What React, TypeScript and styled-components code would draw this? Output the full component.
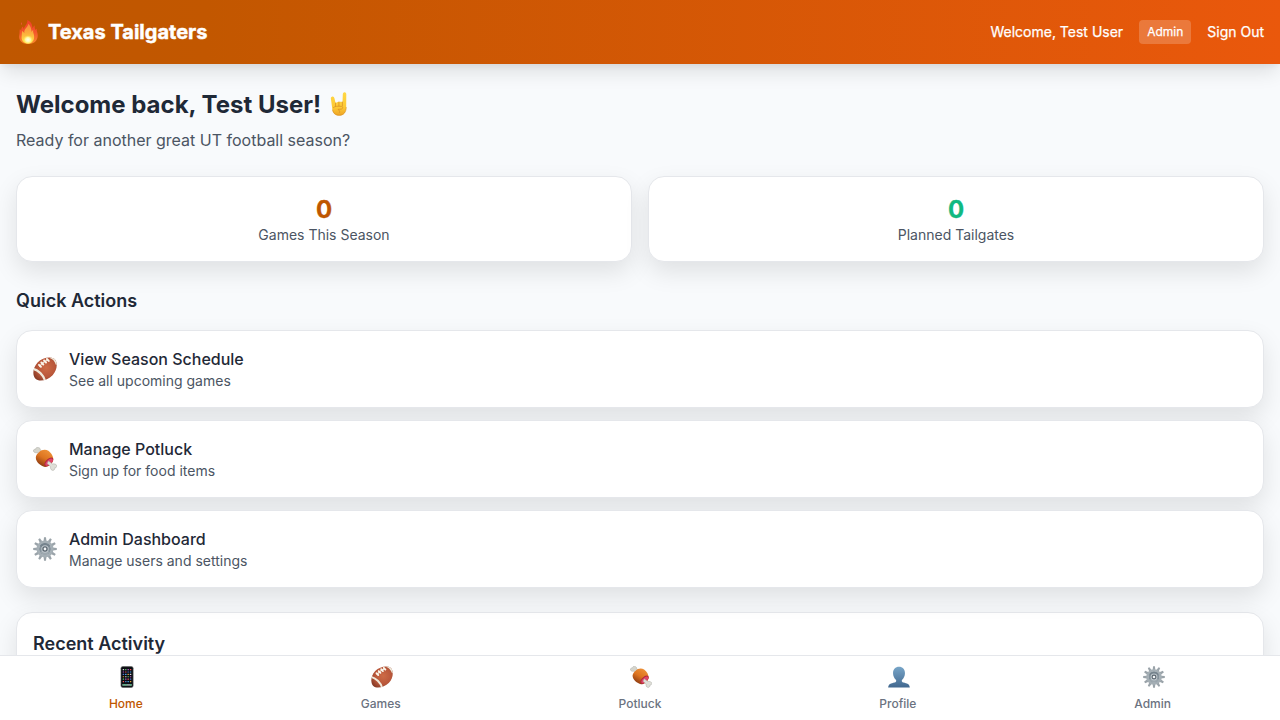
import React from 'react';
import styled, { createGlobalStyle } from 'styled-components';

const GlobalStyle = createGlobalStyle`
  *, *::before, *::after { box-sizing: border-box; }
  html, body { margin: 0; padding: 0; height: 720px; overflow: hidden; }
  body {
    background: #f8fafc;
    color: #1f2937;
    font-family: Inter, "Liberation Sans", sans-serif;
    font-size: 16px;
    line-height: 24px;
    -webkit-font-smoothing: antialiased;
  }
  h1, h2, h3, p { margin: 0; }
  button { font: inherit; border: 0; background: none; padding: 0; color: inherit; cursor: pointer; }
`;

const Screen = styled.div`
  height: 720px;
  display: flex;
  flex-direction: column;
  overflow: hidden;
`;

const Header = styled.header`
  position: relative;
  z-index: 1;
  flex: none;
  height: 64px;
  padding: 0 16px;
  display: flex;
  align-items: center;
  justify-content: space-between;
  color: #fff;
  background: linear-gradient(90deg, #bf5700 0%, #c25700 16%, #ea580c 100%);
  box-shadow: 0 10px 20px -3px rgba(0, 0, 0, 0.12), 0 4px 6px -2px rgba(0, 0, 0, 0.05);
`;

const Brand = styled.div`
  display: flex;
  align-items: center;
  gap: 8px;
  font-size: 20px;
  line-height: 28px;
  font-weight: 700;
  -webkit-text-stroke: 0.45px #fff;
`;

const Account = styled.div`
  display: flex;
  align-items: center;
  gap: 16px;
  font-size: 14px;
  line-height: 20px;
  -webkit-text-stroke: 0.25px #fff;
`;

const RoleBadge = styled.span`
  padding: 4px 8px;
  border-radius: 4px;
  background: rgba(255, 255, 255, 0.2);
  font-size: 12px;
  line-height: 16px;
`;

const Main = styled.main`
  flex: 1;
  min-height: 0;
  padding: 24px 16px 0;
  overflow: hidden;
`;

const Title = styled.h1`
  display: flex;
  align-items: center;
  gap: 7px;
  font-size: 24px;
  line-height: 32px;
  font-weight: 700;
`;

const TitleText = styled.span`
  height: 32px;
  padding-top: 1px;
`;

const Subtitle = styled.p`
  margin-top: 8px;
  color: #4b5563;
`;

const Card = styled.section`
  border: 1px solid #e5e7eb;
  border-radius: 16px;
  padding: 16px;
  background: #fff;
  box-shadow: 0 10px 25px rgba(0, 0, 0, 0.1);
`;

const Stats = styled.div`
  display: grid;
  grid-template-columns: 1fr 1fr;
  gap: 16px;
  margin: 24px 0;
`;

const StatCard = styled(Card)`
  text-align: center;
`;

const StatValue = styled.div<{ $color: string }>`
  height: 32px;
  padding-top: 1px;
  font-size: 24px;
  line-height: 32px;
  font-weight: 700;
  -webkit-text-stroke: 0.3px currentColor;
  color: ${(p) => p.$color};
`;

const SmallText = styled.p`
  font-size: 14px;
  line-height: 20px;
  color: #4b5563;
`;

const SectionTitle = styled.h2`
  height: 28px;
  padding-top: 1px;
  font-size: 18px;
  line-height: 28px;
  font-weight: 600;
`;

const Actions = styled.div`
  display: grid;
  gap: 12px;
  margin: 16px 0 24px;
`;

const ActionCard = styled(Card)`
  display: flex;
  align-items: center;
  gap: 12px;
`;

const ActionTitle = styled.h3`
  font-size: 16px;
  line-height: 24px;
  font-weight: 500;
`;

const BottomNav = styled.nav`
  position: relative;
  z-index: 1;
  flex: none;
  height: 65px;
  border-top: 1px solid #e5e7eb;
  background: #fff;
  display: flex;
  justify-content: space-around;
`;

const NavItem = styled.button<{ $active?: boolean }>`
  padding: 8px 12px;
  display: flex;
  flex-direction: column;
  align-items: center;
  gap: 4px;
  font-size: 12px;
  line-height: 16px;
  font-weight: 500;
  color: ${(p) => (p.$active ? '#bf5700' : '#6b7280')};
`;

const NavIcon = styled.span`
  height: 28px;
  padding: 0 0 2px 2px;
  display: flex;
  align-items: center;
`;

const Glyph = styled.svg`
  display: block;
  flex: none;
`;

type IconProps = { size: number };

const Fire = ({ size }: IconProps) => (
  <Glyph width={size} height={size} viewBox="0 0 24 24">
    <defs>
      <linearGradient id="fireOuter" x1="0" y1="0" x2="0" y2="1">
        <stop offset="0" stopColor="#f0402a" />
        <stop offset=".5" stopColor="#f4552b" />
        <stop offset="1" stopColor="#f98b2c" />
      </linearGradient>
      <linearGradient id="fireInner" x1="0" y1="0" x2="0" y2="1">
        <stop offset="0" stopColor="#f98a3c" />
        <stop offset=".5" stopColor="#fbb03c" />
        <stop offset="1" stopColor="#ffe94a" />
      </linearGradient>
      <radialGradient id="fireCore">
        <stop offset="0" stopColor="#fffff0" />
        <stop offset=".5" stopColor="#fff9a8" />
        <stop offset="1" stopColor="#ffec50" stopOpacity="0" />
      </radialGradient>
    </defs>
    <path fill="url(#fireOuter)" d="M11.300 0c2.500.9 4.500 3.200 4.900 6.200.2 1 .3 1.700.6 2.300.2-1.300.8-2.300 2-2.900-.3 1.600 0 2.900.5 4.400.4-.6.8-1 1.500-1.300-.3 1.500.3 3 .7 4.600 1.100 5-1.300 10.700-9.300 10.700-7.300 0-10.100-4.700-8.800-9.800.5-2-.2-3.700.7-5.400.2 1 .7 1.500 1.300 1.900-.3-2 .2-3.300 1.600-4.300 0 1 .4 1.900 1 2.600C8.400 5.500 12 4 11.300 0z" />
    <path fill="#f0563a" opacity=".85" d="M5.300 2.300c.9.800 1 1.900.3 2.800-.8-.7-.9-1.700-.3-2.800z" />
    <path fill="url(#fireInner)" d="M12.200 3.800c2.600 2.300 3.100 5 3.400 8.200.3-.9.800-1.500 1.600-1.900-.3 1.700.3 3.200.7 4.700.9 4.500-1 8.600-5.900 8.600s-7-3.500-6.300-7.700c.3-1.900-.1-3.200.8-4.900.4 1.100 1 1.800 1.900 2.200-.8-4 3.600-5.200 3.800-9.200z" />
    <ellipse cx="12" cy="19.800" rx="5" ry="4.600" fill="url(#fireCore)" />
  </Glyph>
);

const Horns = ({ size }: IconProps) => (
  <Glyph width={size} height={size} viewBox="0 0 24 24">
    <defs>
      <linearGradient id="handFill" x1="0" y1="0" x2="0" y2="1">
        <stop offset="0" stopColor="#ffd845" />
        <stop offset=".65" stopColor="#fdc935" />
        <stop offset="1" stopColor="#eda326" />
      </linearGradient>
    </defs>
    <path fill="url(#handFill)" d="M4 4.700c1.300-.4 2.200.4 2.500 1.900l1 4.300c2.200-1.200 4.900-1.300 7-.8l.3-7.800C14.900.9 15.700.2 16.700.3c1.100.1 1.600.9 1.600 2l-.1 12.500c.2 5.300-2.400 8.800-7.100 8.800-4.200 0-6.300-2.500-6.800-6.500L2.900 6.800C2.700 5.700 3.100 5 4 4.700z" />
    <path fill="none" stroke="#d9932a" strokeWidth=".8" strokeLinecap="round" d="M7.500 11v3.500m3.400-4.500v4m3.500-4v4M5.400 15.600c1.700-1.600 4.800-1.600 8-1.200 1.900.4 1.700 2.400-.3 2.700l-3.200.3c1.700.9 2.100 1.900 1.700 3" />
    <path fill="none" stroke="#d78e20" strokeWidth=".6" d="M18.200 15c0 5-2.300 8.300-7.100 8.300-3.700 0-5.900-2-6.600-5.600" />
  </Glyph>
);

const Football = ({ size }: IconProps) => (
  <Glyph width={size} height={size} viewBox="0 0 24 24">
    <defs>
      <radialGradient id="ballFill" cx=".55" cy=".45" r=".68">
        <stop offset="0" stopColor="#cd6b45" />
        <stop offset=".55" stopColor="#b9573a" />
        <stop offset="1" stopColor="#7a3320" />
      </radialGradient>
      <clipPath id="ballClip">
        <path d="M2.500 21.800C-1 18.400-.2 10.600 4.600 5.500 9.400.5 18-1 21.600 2.100c3.500 3.500 2.600 11.300-2 16.200-5 5.200-13.600 6.900-17.100 3.500z" />
      </clipPath>
    </defs>
    <g clipPath="url(#ballClip)">
      <path fill="url(#ballFill)" d="M0 0h24v24H0z" />
      <path fill="none" stroke="#efe9da" strokeWidth="2.200" d="M-1 11.500C5 12.800 11 18 12.500 25M17 0c3.400 1 5.700 3.900 7 7.600" />
      <path fill="none" stroke="#f1e9d8" strokeWidth="1.100" d="M6.500 9.700C8.500 6.500 11.600 4.200 15 3" />
      <path stroke="#faf5ea" strokeWidth="2" strokeLinecap="round" d="M6 7.900 7.900 9.800m.5-4.300 1.900 2m.8-4 1.900 2m.9-3.500 1.800 1.900" />
    </g>
  </Glyph>
);

const Meat = ({ size }: IconProps) => (
  <Glyph width={size} height={size} viewBox="0 0 24 24">
    <defs>
      <linearGradient id="meatFill" x1=".8" y1="0" x2=".2" y2="1">
        <stop offset="0" stopColor="#f0953a" />
        <stop offset=".5" stopColor="#dd7420" />
        <stop offset="1" stopColor="#7e300f" />
      </linearGradient>
    </defs>
    <path fill="#d5d5cd" stroke="#a8a8a0" strokeWidth=".5" d="M6.500 7.200 4.200 5.700C2.500 6.200.2 5.200.4 3.500.6 2.500 1.500 2.200 2.400 2.400 2.500.9 3.800.3 5.200.5 7 .8 7.600 2 7.300 3.200l1.800 1.700z" />
    <path fill="url(#meatFill)" d="M6.200 5.100C8.400 2.700 12.400 2 15.400 3.800c3 2.200 5.200 6 4.900 9.200-.7 3.700-4.500 7-8.300 6.900C7.800 18.800 3 15.500 2.800 10.700c0-2.300 1.600-4.100 3.400-5.600z" />
    <ellipse cx="15.800" cy="14.900" rx="5.600" ry="2.900" transform="rotate(-44 15.800 14.900)" fill="#b02940" />
    <ellipse cx="16.100" cy="15.100" rx="4.600" ry="2.200" transform="rotate(-44 16.100 15.100)" fill="#e0466a" />
    <path fill="#dfdfd8" stroke="#a8a8a0" strokeWidth=".5" d="m15.500 14 4 3c1.600-.5 4.200.2 4.300 1.900.1 1.200-.9 1.900-1.900 1.800.1 1.900-1.200 3-2.700 2.600-1.500-.4-1.900-2.200-1.700-3.700l-3.300-3z" />
  </Glyph>
);

const Gear = ({ size }: IconProps) => (
  <Glyph width={size} height={size} viewBox="0 0 24 24">
    <g fill="#9aa3a9">
      {Array.from({ length: 12 }, (_, i) => (
        <path key={i} d="M10.500 4.500 11 .2h2l.5 4.300z" transform={`rotate(${i * 30} 12 12)`} />
      ))}
    </g>
    <circle cx="12" cy="12" r="7.200" fill="none" stroke="#a5afb5" strokeWidth="2.600" />
    <circle cx="12" cy="12" r="6" fill="#85929b" />
    <path d="M6.800 9A6 6 0 0 1 17.200 9L12 12z" fill="#75838d" />
    <path d="M7 15.200a6 6 0 0 0 10 0L12 12z" fill="#9da8af" />
    <circle cx="12" cy="12" r="3.700" fill="#c0c8cd" />
    <circle cx="12" cy="12" r="2.700" fill="#59656f" />
    <circle cx="12" cy="12" r="1.400" fill="#f4f6f7" />
  </Glyph>
);

const appColors = ['#d8d8d8', '#44a5e8', '#ef5555', '#64c36b', '#d9a13a', '#5379cf', '#b45ac4'];

const Phone = ({ size }: IconProps) => (
  <Glyph width={size} height={size} viewBox="0 0 24 24">
    <rect x="5.400" y=".5" width="13.300" height="23" rx="2" fill="#151719" stroke="#55595c" strokeWidth=".6" />
    <rect x="6.500" y="2" width="11.100" height="20" rx=".8" fill="#080b12" />
    {Array.from({ length: 24 }, (_, i) => (
      <rect
        key={i}
        x={7.3 + (i % 4) * 2.6}
        y={3.3 + Math.floor(i / 4) * 2.6}
        width="1.600"
        height="1.300"
        rx=".3"
        fill={appColors[(i * 3 + Math.floor(i / 4)) % 7]}
      />
    ))}
    <rect x="6.900" y="19.600" width="10.300" height="2" fill="#8b9896" />
    <path stroke="#36b877" strokeWidth="1.400" d="M7.500 20.600h1.600m1 0h1.600m3.500 0h1.600" />
  </Glyph>
);

const Person = ({ size }: IconProps) => (
  <Glyph width={size} height={size} viewBox="0 0 24 24">
    <defs>
      <linearGradient id="personFill" x1="0" y1="0" x2="0" y2="1">
        <stop offset="0" stopColor="#77a5c8" />
        <stop offset="1" stopColor="#42688f" />
      </linearGradient>
    </defs>
    <path fill="url(#personFill)" d="M12 .8c3.900 0 6.500 2.700 6.500 7 0 2.900-1.400 5.800-3.300 7.400-.5 1.500.1 2.300 1.600 2.700 3.900.9 6.900 1.600 7 5.600H.2c.1-4 3.100-4.700 7-5.600 1.500-.4 2.100-1.200 1.600-2.700-1.900-1.600-3.300-4.500-3.300-7.400 0-4.300 2.600-7 6.500-7z" />
  </Glyph>
);

const actions = [
  { Icon: Football, title: 'View Season Schedule', text: 'See all upcoming games' },
  { Icon: Meat, title: 'Manage Potluck', text: 'Sign up for food items' },
  { Icon: Gear, title: 'Admin Dashboard', text: 'Manage users and settings' },
];

const tabs = [
  { Icon: Phone, label: 'Home' },
  { Icon: Football, label: 'Games' },
  { Icon: Meat, label: 'Potluck' },
  { Icon: Person, label: 'Profile' },
  { Icon: Gear, label: 'Admin' },
];

export default function App() {
  return (
    <Screen>
      <GlobalStyle />
      <Header>
        <Brand>
          <Fire size={24} />
          <span>Texas Tailgaters</span>
        </Brand>
        <Account>
          <span>Welcome, Test User</span>
          <RoleBadge>Admin</RoleBadge>
          <button>Sign Out</button>
        </Account>
      </Header>
      <Main>
        <Title>
          <TitleText>Welcome back, Test User!</TitleText>
          <Horns size={24} />
        </Title>
        <Subtitle>Ready for another great UT football season?</Subtitle>
        <Stats>
          <StatCard>
            <StatValue $color="#bf5700">0</StatValue>
            <SmallText>Games This Season</SmallText>
          </StatCard>
          <StatCard>
            <StatValue $color="#10b981">0</StatValue>
            <SmallText>Planned Tailgates</SmallText>
          </StatCard>
        </Stats>
        <SectionTitle>Quick Actions</SectionTitle>
        <Actions>
          {actions.map(({ Icon, title, text }) => (
            <ActionCard key={title}>
              <Icon size={24} />
              <div>
                <ActionTitle>{title}</ActionTitle>
                <SmallText>{text}</SmallText>
              </div>
            </ActionCard>
          ))}
        </Actions>
        <Card>
          <SectionTitle>Recent Activity</SectionTitle>
        </Card>
      </Main>
      <BottomNav>
        {tabs.map(({ Icon, label }, i) => (
          <NavItem key={label} $active={i === 0}>
            <NavIcon>
              <Icon size={22} />
            </NavIcon>
            {label}
          </NavItem>
        ))}
      </BottomNav>
    </Screen>
  );
}
